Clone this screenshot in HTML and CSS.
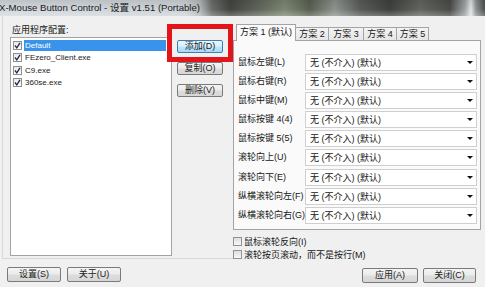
FILE: index.html
```html
<!DOCTYPE html>
<html>
<head>
<meta charset="utf-8">
<title>X-Mouse Button Control</title>
<link rel="stylesheet" href="styles.css">
</head>
<body>
<div class="window">
  <div class="titlebar"><span class="title">X-Mouse Button Control - 设置 v1.51 (Portable)</span></div>
  <div class="main">
    <div class="left">
      <div class="leftpane">
        <div class="grouplabel">应用程序配置:</div>
        <div class="listrow">
          <div class="listbox">
            <div class="item"><span class="chk"><svg width="9" height="9" viewBox="0 0 9 9"><polyline points="2,4.5 3.8,6.8 7,1.8" fill="none" stroke="#1f2a44" stroke-width="1.3"/></svg></span><span class="itext sel">Default</span></div>
            <div class="item"><span class="chk"><svg width="9" height="9" viewBox="0 0 9 9"><polyline points="2,4.5 3.8,6.8 7,1.8" fill="none" stroke="#1f2a44" stroke-width="1.3"/></svg></span><span class="itext">FEzero_Client.exe</span></div>
            <div class="item"><span class="chk"><svg width="9" height="9" viewBox="0 0 9 9"><polyline points="2,4.5 3.8,6.8 7,1.8" fill="none" stroke="#1f2a44" stroke-width="1.3"/></svg></span><span class="itext">C9.exe</span></div>
            <div class="item"><span class="chk"><svg width="9" height="9" viewBox="0 0 9 9"><polyline points="2,4.5 3.8,6.8 7,1.8" fill="none" stroke="#1f2a44" stroke-width="1.3"/></svg></span><span class="itext">360se.exe</span></div>
          </div>
          <div class="sidebtns">
            <div class="btn primary">添加(D)</div>
            <div class="btn">复制(O)</div>
            <div class="btn">删除(V)</div>
          </div>
        </div>
      </div>
      <div class="btnrow lbtns">
        <div class="btn big w54">设置(S)</div>
        <div class="btn big w54">关于(U)</div>
      </div>
    </div>
    <div class="right">
      <div class="tabs">
        <div class="tab active">方案 1 (默认)</div>
        <div class="tab t33">方案 2</div>
        <div class="tab t35">方案 3</div>
        <div class="tab t33">方案 4</div>
        <div class="tab t32">方案 5</div>
      </div>
      <div class="panel">
        <div class="maprows">
          <div class="lbl">鼠标左键(L)</div><div class="combo"><span class="ctext">无 (不介入) (默认)</span><span class="arrow"></span></div>
          <div class="lbl">鼠标右键(R)</div><div class="combo"><span class="ctext">无 (不介入) (默认)</span><span class="arrow"></span></div>
          <div class="lbl">鼠标中键(M)</div><div class="combo"><span class="ctext">无 (不介入) (默认)</span><span class="arrow"></span></div>
          <div class="lbl">鼠标按键 4(4)</div><div class="combo"><span class="ctext">无 (不介入) (默认)</span><span class="arrow"></span></div>
          <div class="lbl">鼠标按键 5(5)</div><div class="combo"><span class="ctext">无 (不介入) (默认)</span><span class="arrow"></span></div>
          <div class="lbl">滚轮向上(U)</div><div class="combo"><span class="ctext">无 (不介入) (默认)</span><span class="arrow"></span></div>
          <div class="lbl">滚轮向下(E)</div><div class="combo"><span class="ctext">无 (不介入) (默认)</span><span class="arrow"></span></div>
          <div class="lbl">纵横滚轮向左(F)</div><div class="combo"><span class="ctext">无 (不介入) (默认)</span><span class="arrow"></span></div>
          <div class="lbl">纵横滚轮向右(G)</div><div class="combo"><span class="ctext">无 (不介入) (默认)</span><span class="arrow"></span></div>
        </div>
      </div>
      <div class="opts">
        <div class="opt"><span class="box"></span><span class="otext">鼠标滚轮反向(I)</span></div>
        <div class="opt"><span class="box"></span><span class="otext">滚轮按页滚动，而不是按行(M)</span></div>
      </div>
      <div class="btnrow rbtns">
        <div class="btn big w56">应用(A)</div>
        <div class="btn big w53">关闭(C)</div>
      </div>
    </div>
  </div>
  <div class="annot"></div>
</div>
</body>
</html>
```

FILE: styles.css
```css
* { box-sizing: border-box; }
html, body { margin: 0; padding: 0; }
body {
  width: 485px;
  height: 287px;
  overflow: hidden;
  background: #f0f0f0;
  font-family: "Liberation Sans", "Noto Sans CJK SC", sans-serif;
  font-size: 9px;
  color: #161616;
}
.window { position: relative; width: 485px; height: 287px; }

.titlebar {
  height: 16px;
  overflow: hidden;
  white-space: nowrap;
  background:
    linear-gradient(to bottom, rgba(0,0,0,0.10), rgba(0,0,0,0) 60%, rgba(255,255,255,0.25)),
    linear-gradient(to right, #d3d9de 0, #cdd3d8 185px, #b4b8b8 200px, #6a6d69 212px, #434541 230px,
      #5d6158 255px, #7d8773 285px, #596052 310px, #8e938e 335px, #5a5c58 360px, #3f413f 390px,
      #63665f 420px, #4a4c49 450px, #9ea3a5 465px, #e2e5e6 471px, #8e9293 476px, #4d504f 485px);
}
.title {
  display: block;
  margin-left: -1px;
  font-size: 9.6px;
  line-height: 15px;
  color: #1b1b1b;
}

.main { display: flex; height: 271px; }

.left { width: 233px; display: flex; flex-direction: column; }
.leftpane {
  margin-left: 2px;
  height: 243px;
  border-left: 1px solid #d8d8d8;
  border-bottom: 1px solid #d8d8d8;
  padding: 8px 0 0 7px;
}
.grouplabel { height: 13px; line-height: 13px; padding-left: 2px; }
.listrow { display: flex; }
.listbox {
  width: 162px;
  height: 219px;
  background: #fff;
  border: 1px solid #a3a3a3;
  padding-top: 1px;
}
.item { height: 12.5px; display: flex; align-items: center; }
.chk {
  width: 9px; height: 9px;
  margin-left: 2px;
  border: 1px solid #8e8f8f;
  background: linear-gradient(#e9e9e9, #ffffff);
  display: flex;
  align-items: center;
  justify-content: center;
}
.chk svg { display: block; flex: none; }
.itext {
  margin-left: 2px;
  width: 142px;
  height: 11px;
  line-height: 11px;
  padding-left: 1px;
  font-size: 8px;
  color: #1a1a1a;
}
.itext.sel { background: #3a93ea; color: #ffffff; }

.sidebtns {
  margin-left: 5px;
  padding-top: 3px;
  width: 46px;
  display: flex;
  flex-direction: column;
  gap: 9px;
}
.btn {
  height: 13px;
  line-height: 11px;
  text-align: center;
  border: 1px solid #7a7a7a;
  border-radius: 2px;
  background: linear-gradient(#f4f4f4, #ebebeb 48%, #dddddd 52%, #d6d6d6);
  color: #1a1a1a;
  font-size: 9px;
  white-space: nowrap;
}
.btn.primary {
  border-color: #3c7fb1;
  background: linear-gradient(#eaf6fd, #d9f0fc 48%, #bee6fd 52%, #a7d9f5);
}
.btn.big { height: 15px; line-height: 13px; }
.w54 { width: 54px; }
.w56 { width: 56px; }
.w53 { width: 53px; }
.btnrow { display: flex; gap: 6px; margin-top: 8px; }
.lbtns { padding-left: 7px; }

.right { width: 252px; display: flex; flex-direction: column; }
.tabs {
  margin-top: 8px;
  height: 16px;
  display: flex;
  align-items: flex-end;
  padding-left: 3px;
}
.tab {
  height: 13px;
  line-height: 12px;
  border: 1px solid #a4a4a4;
  border-bottom: none;
  background: linear-gradient(#f3f3f3, #e6e6e6);
  text-align: center;
  margin-left: -1px;
  white-space: nowrap;
}
.tab.active {
  width: 60px;
  height: 17px;
  line-height: 15px;
  margin-left: 0;
  margin-bottom: -1px;
  background: #fafafa;
  z-index: 1;
}
.t33 { width: 34px; }
.t35 { width: 36px; }
.t32 { width: 33px; }

.panel {
  width: 248px;
  height: 190px;
  border: 1px solid #a4a4a4;
  background: #fafafa;
  padding: 13px 3px 0 4px;
}
.maprows {
  display: grid;
  grid-template-columns: 67px 172px;
  grid-auto-rows: 17px;
  row-gap: 2.1px;
}
.lbl { line-height: 17px; white-space: nowrap; }
.combo {
  display: flex;
  align-items: center;
  background: #ffffff;
  border: 1px solid #cfcfcf;
}
.ctext { padding-left: 4px; }
.arrow {
  margin-left: auto;
  margin-right: 3px;
  width: 0; height: 0;
  border-left: 3px solid transparent;
  border-right: 3px solid transparent;
  border-top: 3px solid #111;
}

.opts { margin-top: 5px; }
.opt { height: 13px; display: flex; align-items: center; }
.box {
  width: 9px; height: 9px;
  border: 1px solid #929292;
  background: linear-gradient(#dedede, #f7f7f7);
}
.otext { margin-left: 2px; }

.rbtns { justify-content: flex-end; padding-right: 9px; gap: 5px; margin-top: 7px; }

.annot {
  position: absolute;
  left: 167px;
  top: 24px;
  width: 66px;
  height: 38px;
  border: 5px solid #e3151a;
}
```
